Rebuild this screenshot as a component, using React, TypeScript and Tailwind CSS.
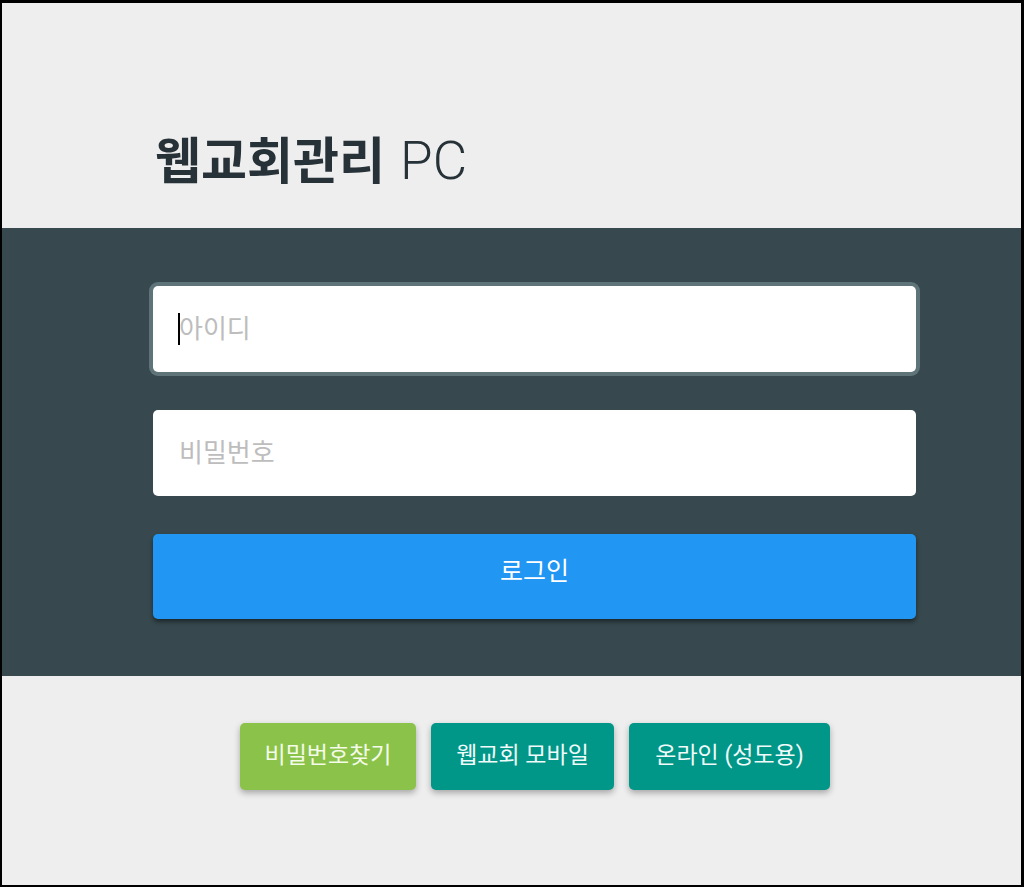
import { useState } from 'react';

const KR = "font-['Roboto','Noto_Sans_CJK_KR',sans-serif]";

export default function App() {
  const [id, setId] = useState('');
  const [pw, setPw] = useState('');

  return (
    <div className={`w-[1024px] h-[887px] border-black border-l-2 border-r-[3px] border-t-[3px] border-b-2 bg-[#eeeeee] flex flex-col ${KR}`}>
      {/* title */}
      <header className="h-[225px] flex items-end pb-[40px] pl-[153px]">
        <h1 className="leading-none text-[#263238] flex items-baseline gap-[15px]">
          <span className="text-[50px] font-bold font-['Noto_Sans_CJK_KR',sans-serif]">웹교회관리</span>
          <span className="text-[53px] font-light font-['Roboto',sans-serif]">PC</span>
        </h1>
      </header>

      {/* login band */}
      <section className="bg-[#37494e] pt-[58px] pb-[57px] pl-[151px]">
        <div className="w-[763px] flex flex-col gap-[38px]">
          <div className="relative">
            <input
              value={id}
              onChange={e => setId(e.target.value)}
              placeholder="아이디"
              className="w-full h-[86px] bg-white rounded-[5px] px-[26px] text-[26px] text-[#333] placeholder-[#bdbdbd] outline-none ring-4 ring-[#5e7479]"
            />
            {!id && <span className="absolute left-[25px] top-[27px] w-[2px] h-[32px] bg-black" />}
          </div>
          <input
            type="password"
            value={pw}
            onChange={e => setPw(e.target.value)}
            placeholder="비밀번호"
            className="w-full h-[86px] bg-white rounded-[5px] px-[26px] text-[26px] text-[#333] placeholder-[#bdbdbd] outline-none"
          />
          <button className="w-full h-[85px] pb-[10px] bg-[#2196f3] rounded-[5px] text-white text-[25px] shadow-[0_3px_4px_rgba(0,0,0,0.45)]">
            로그인
          </button>
        </div>
      </section>

      {/* links */}
      <div className="pt-[47px] pl-[238px] flex gap-[15px]">
        <button className="h-[67px] w-[176px] rounded-[5px] bg-[#8bc34a] text-[#f4fbe9] text-[23px] shadow-[0_3px_6px_rgba(0,0,0,0.3)]">
          비밀번호찾기
        </button>
        <button className="h-[67px] w-[183px] rounded-[5px] bg-[#009688] text-[#f0fbfa] text-[23px] shadow-[0_3px_6px_rgba(0,0,0,0.3)]">
          웹교회 모바일
        </button>
        <button className="h-[67px] w-[201px] rounded-[5px] bg-[#009688] text-[#f0fbfa] text-[23px] shadow-[0_3px_6px_rgba(0,0,0,0.3)]">
          온라인 (성도용)
        </button>
      </div>
    </div>
  );
}
